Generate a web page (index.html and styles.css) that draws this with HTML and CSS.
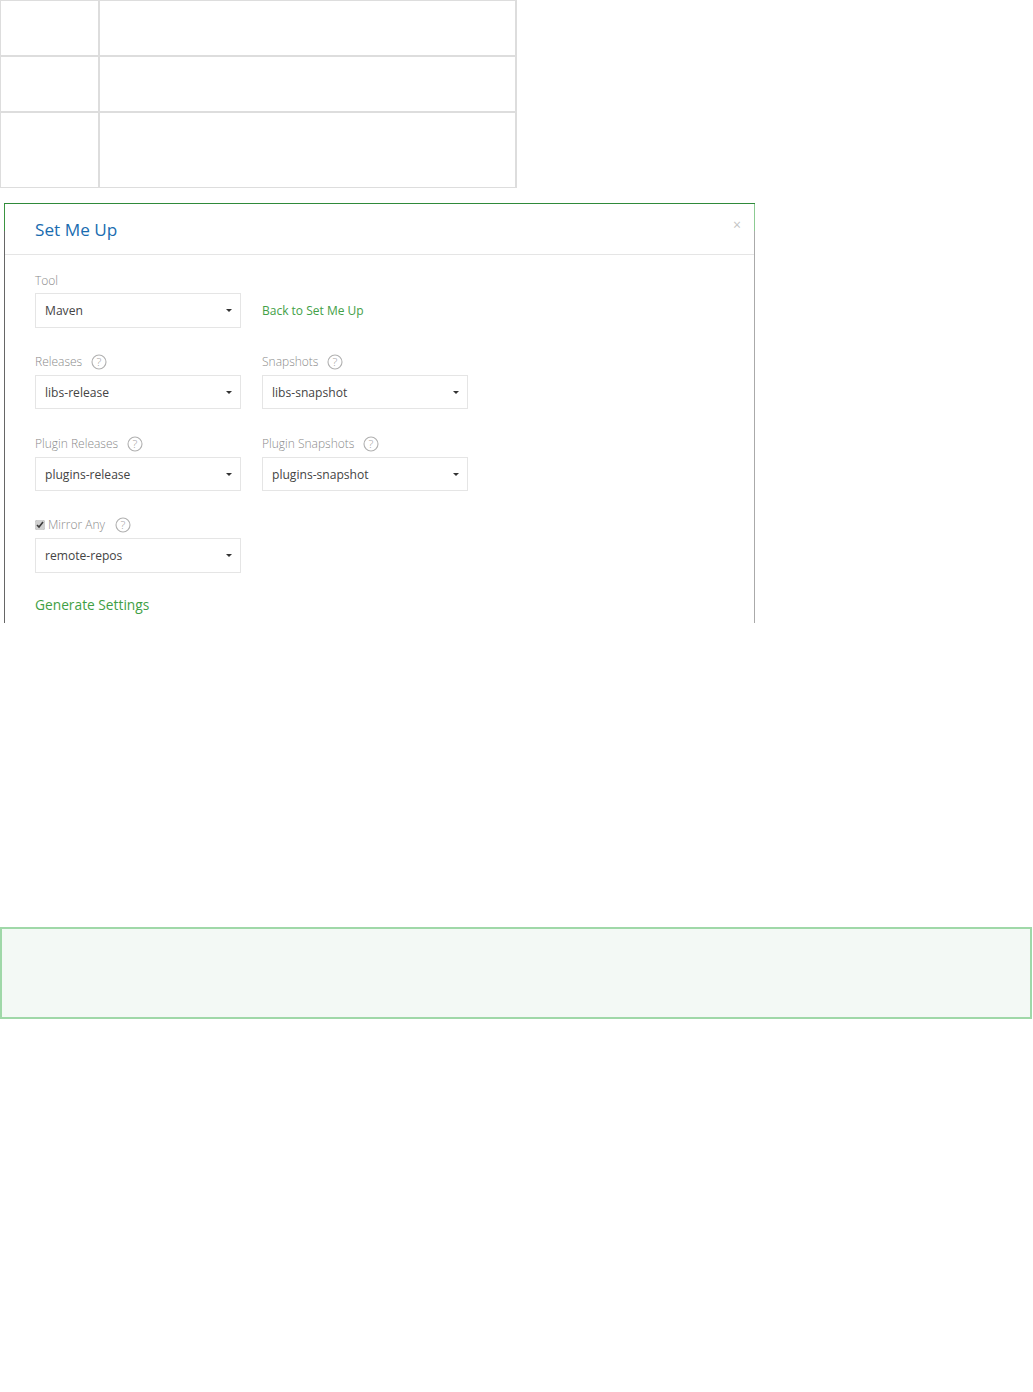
FILE: index.html
```html
<!DOCTYPE html>
<html lang="en">
<head>
<meta charset="utf-8">
<title>Set Me Up</title>
<link rel="stylesheet" href="styles.css">
</head>
<body>
<table class="grid">
  <tr class="row-short"><td class="col-a"></td><td class="col-b"></td></tr>
  <tr class="row-short"><td class="col-a"></td><td class="col-b"></td></tr>
  <tr class="row-tall"><td class="col-a"></td><td class="col-b"></td></tr>
</table>
<section class="dialog">
  <header class="dialog-head">
    <h2 class="dialog-title">Set Me Up</h2>
    <span class="dialog-close">×</span>
  </header>
  <div class="dialog-body">
    <div class="form-row form-row-first">
      <div class="field">
        <div class="label label-tool">Tool</div>
        <div class="select select-tall"><span>Maven</span><i class="caret"></i></div>
      </div>
      <a class="back-link">Back to Set Me Up</a>
    </div>
    <div class="form-row">
      <div class="field">
        <div class="label"><span>Releases</span><svg class="help" viewBox="0 0 16 16"><circle cx="8" cy="8" r="7"/><text x="8" y="12">?</text></svg></div>
        <div class="select"><span>libs-release</span><i class="caret"></i></div>
      </div>
      <div class="field">
        <div class="label"><span>Snapshots</span><svg class="help" viewBox="0 0 16 16"><circle cx="8" cy="8" r="7"/><text x="8" y="12">?</text></svg></div>
        <div class="select"><span>libs-snapshot</span><i class="caret"></i></div>
      </div>
    </div>
    <div class="form-row">
      <div class="field">
        <div class="label"><span>Plugin Releases</span><svg class="help" viewBox="0 0 16 16"><circle cx="8" cy="8" r="7"/><text x="8" y="12">?</text></svg></div>
        <div class="select"><span>plugins-release</span><i class="caret"></i></div>
      </div>
      <div class="field">
        <div class="label"><span>Plugin Snapshots</span><svg class="help" viewBox="0 0 16 16"><circle cx="8" cy="8" r="7"/><text x="8" y="12">?</text></svg></div>
        <div class="select"><span>plugins-snapshot</span><i class="caret"></i></div>
      </div>
    </div>
    <div class="form-row">
      <div class="field">
        <div class="label label-check"><input class="check" type="checkbox" checked><span>Mirror Any</span><svg class="help" viewBox="0 0 16 16"><circle cx="8" cy="8" r="7"/><text x="8" y="12">?</text></svg></div>
        <div class="select select-tall"><span>remote-repos</span><i class="caret"></i></div>
      </div>
    </div>
    <a class="generate">Generate Settings</a>
  </div>
</section>
<div class="notice"></div>
</body>
</html>
```
FILE: styles.css
```css
* { box-sizing: border-box; }
html, body { margin: 0; padding: 0; background: #fff; }
body { font-family: "Open Sans", sans-serif; height: 1392px; overflow: hidden; }

.grid { border-collapse: separate; border-spacing: 0; width: 517px; table-layout: fixed; border-top: 1px solid #ddd; border-left: 1px solid #ddd; border-right: 2px solid #ddd; }
.grid td { padding: 0; border-bottom: 2px solid #ddd; }
.grid tr:last-child td { border-bottom-width: 1px; }
.col-a { width: 99px; border-right: 2px solid #ddd; }
.row-short { height: 56px; }
.row-tall { height: 75px; }

.dialog { position: relative; margin: 15px 0 0 4px; padding: 0 1px; width: 751px; height: 420px; overflow: hidden; border-top: 1px solid #2f8a3a; }
.dialog::before, .dialog::after { content: ""; position: absolute; top: 0; bottom: 0; width: 1px; }
.dialog::before { left: 0; background: linear-gradient(#3a9440 27px, #666 27px); }
.dialog::after { right: 0; background: linear-gradient(#8ccb92 27px, #aaa 27px); }
.dialog-head { height: 51px; border-bottom: 1px solid #e5e5e5; padding: 0 13px 0 30px; display: flex; justify-content: space-between; }
.dialog-title { margin: 14px 0 0; font-size: 17.2px; line-height: 24px; font-weight: 400; color: #1a6cb0; }
.dialog-close { font-size: 14px; line-height: 16px; margin-top: 13px; color: #c4c4c4; }
.dialog-body { padding: 17px 0 0 30px; }

.form-row { display: flex; gap: 21px; margin-bottom: 26px; }
.form-row-first { align-items: center; margin-bottom: 25px; }
.field { width: 206px; }
.label { height: 18px; margin-bottom: 4px; font-size: 12px; line-height: 18px; font-weight: 300; color: #8a8a8a; display: flex; align-items: center; gap: 9px; white-space: nowrap; }
.label-tool { margin-bottom: 3px; }
.label-check { margin-top: -1px; gap: 10px; }
.help { width: 16px; height: 16px; flex: none; fill: none; stroke: #b0b0b0; stroke-width: 1.1; }
.help text { font-family: "Open Sans", sans-serif; font-size: 11.5px; text-anchor: middle; fill: #a0a0a0; stroke: none; }
.check { width: 10px; height: 10px; margin: 0 -7px 0 0; accent-color: #d0d0d0; }

.select { height: 34px; border: 1px solid #e5e5e5; padding: 0 8px 0 9px; display: flex; align-items: center; justify-content: space-between; font-size: 12.1px; color: #444; }
.select-tall { height: 35px; }
.caret { width: 0; height: 0; border-left: 3px solid transparent; border-right: 3px solid transparent; border-top: 3px solid #333; }

.back-link { font-size: 12px; color: #43a047; margin-top: 20px; }
.generate { display: block; margin-top: -4px; font-size: 13.75px; line-height: 20px; color: #3f9f45; }

.notice { margin-top: 304px; width: 1032px; height: 92px; background: #f3f9f5; border: 2px solid #9fd8a8; }
```
